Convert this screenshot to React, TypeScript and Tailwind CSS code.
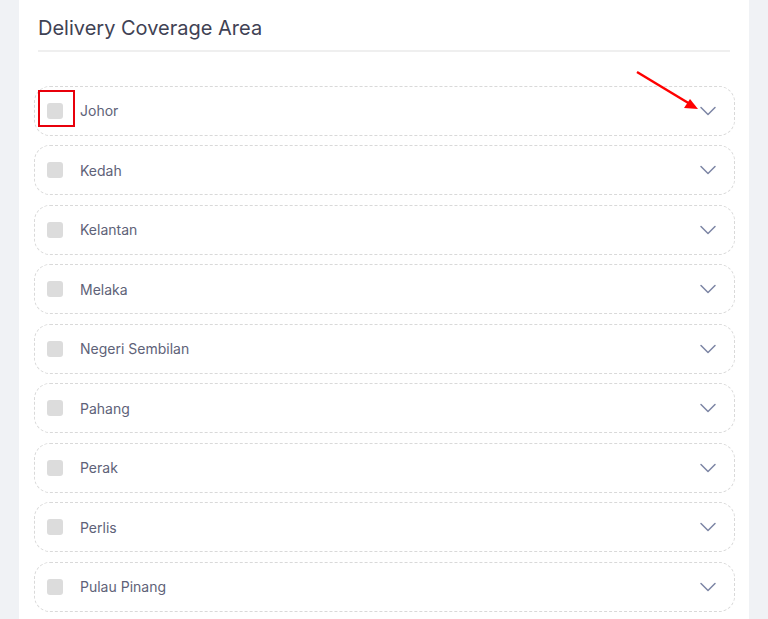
import { ChevronDown } from "lucide-react";

const states = [
  "Johor",
  "Kedah",
  "Kelantan",
  "Melaka",
  "Negeri Sembilan",
  "Pahang",
  "Perak",
  "Perlis",
  "Pulau Pinang",
];

export default function App() {
  return (
    <div
      className="h-[619px] w-[768px] overflow-hidden bg-[#f0f2f5] px-[19px]"
      style={{ fontFamily: "Inter, 'Open Sans', sans-serif" }}
    >
      <div className="h-full bg-white px-[19px] pt-[14px]">
        <h2 className="text-[20px] leading-[28px] text-[#3f4254]">Delivery Coverage Area</h2>
        <div className="mt-[8px] h-[2px] bg-[#efefef]" />

        <div className="-ml-[4px] -mr-[5px] mt-[33.5px] flex flex-col gap-[9.5px]">
          {states.map((name, i) => (
            <div
              key={name}
              className="relative flex h-[50px] items-center rounded-[16px] border border-dashed border-[#d9d9d9] pl-[12px] pr-[12px]"
            >
              <span className="h-[16px] w-[16px] rounded-[3px] bg-[#dcdcdc]" />
              <span className="ml-[17px] flex-1 text-[14px] text-[#5e6278]">{name}</span>
              <ChevronDown className="h-[28px] w-[28px] text-[#7e87a6]" strokeWidth={1.3} />
              {i === 0 && (
                <span className="absolute left-[3px] top-[3.5px] h-[37px] w-[37px] border-2 border-[#e8000b]" />
              )}
            </div>
          ))}
        </div>
      </div>

      {/* annotation arrow */}
      <svg className="absolute left-0 top-0" width="768" height="619" viewBox="0 0 768 619">
        <line x1="637" y1="72" x2="690" y2="104" stroke="#ff0000" strokeWidth="2.5" />
        <polygon points="698,109 684,108 690,99" fill="#ff0000" />
      </svg>
    </div>
  );
}
